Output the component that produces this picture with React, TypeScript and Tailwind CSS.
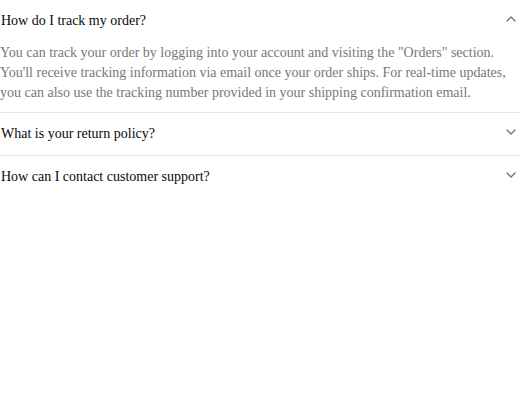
import React, { useState } from 'react';
import { ChevronDown } from 'lucide-react';

const faqs = [
  {
    q: 'How do I track my order?',
    a: 'You can track your order by logging into your account and visiting the "Orders" section. You\'ll receive tracking information via email once your order ships. For real-time updates, you can also use the tracking number provided in your shipping confirmation email.',
  },
  {
    q: 'What is your return policy?',
    a: 'We accept returns within 30 days of delivery for a full refund, as long as items are unused and in their original packaging.',
  },
  {
    q: 'How can I contact customer support?',
    a: 'You can reach our support team by email or live chat, available every day from 9am to 6pm.',
  },
];

export default function App() {
  const [open, setOpen] = useState(0);

  return (
    <div className="w-[520px] bg-white font-['Liberation_Serif',serif]">
      {faqs.map((item, i) => (
        <div key={item.q} className={i < faqs.length - 1 ? 'border-b border-[#e5e5e5]' : ''}>
          <button
            onClick={() => setOpen(open === i ? -1 : i)}
            className="flex w-full items-center justify-between py-[11px] pl-px pr-px text-left text-sm leading-5 text-[#0a0a0a]"
          >
            <span>{item.q}</span>
            <ChevronDown
              size={16}
              className={`-translate-y-0.5 text-[#737373] transition-transform ${open === i ? 'rotate-180' : ''}`}
            />
          </button>
          {open === i && (
            <div className="pb-[9px] pt-px text-sm leading-5 text-[#777]">{item.a}</div>
          )}
        </div>
      ))}
    </div>
  );
}
